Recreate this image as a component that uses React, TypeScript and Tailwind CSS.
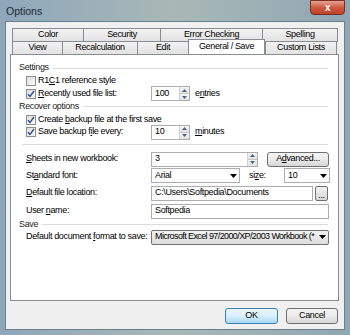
import React from "react";

const font = { fontFamily: "'Liberation Sans', Arial, sans-serif" };

function Check({ checked }: { checked?: boolean }) {
  return (
    <div className="w-[10px] h-[10px] border border-[#8f8f8f] bg-gradient-to-br from-[#dcdcdc] to-[#fbfbfb] flex items-center justify-center shrink-0">
      {checked && (
        <svg width="8" height="8" viewBox="0 0 8 8">
          <path d="M1 4.2 L3 6.4 L7 1" stroke="#2a4f8a" strokeWidth="1.4" fill="none" />
        </svg>
      )}
    </div>
  );
}

function U({ children }: { children: React.ReactNode }) {
  return <span className="underline underline-offset-1">{children}</span>;
}

function Spin() {
  return (
    <div className="w-[10px] h-full flex flex-col border-l border-[#d0d0d0] shrink-0">
      <div className="flex-1 flex items-center justify-center bg-gradient-to-b from-[#f6f6f6] to-[#e2e2e2] border-b border-[#c8c8c8]">
        <svg width="5" height="3" viewBox="0 0 5 3"><path d="M0 3 L2.5 0 L5 3Z" fill="#4d6185" /></svg>
      </div>
      <div className="flex-1 flex items-center justify-center bg-gradient-to-b from-[#f6f6f6] to-[#e2e2e2]">
        <svg width="5" height="3" viewBox="0 0 5 3"><path d="M0 0 L2.5 3 L5 0Z" fill="#4d6185" /></svg>
      </div>
    </div>
  );
}

function SpinInput({ value, w }: { value: string; w: string }) {
  return (
    <div className={`${w} h-[15px] border border-[#abadb3] bg-white flex items-stretch shrink-0`}>
      <div className="flex-1 pl-[3px] flex items-center">{value}</div>
      <Spin />
    </div>
  );
}

function Arrow() {
  return (
    <div className="w-[12px] flex items-center justify-center shrink-0">
      <svg width="7" height="4" viewBox="0 0 7 4"><path d="M0 0 L7 0 L3.5 4Z" fill="#000" /></svg>
    </div>
  );
}

function Combo({ value, w }: { value: string; w: string }) {
  return (
    <div className={`${w} h-[15px] border border-[#abadb3] bg-white flex items-center shrink-0`}>
      <div className="flex-1 pl-[3px] overflow-hidden">{value}</div>
      <Arrow />
    </div>
  );
}

function Section({ title }: { title: string }) {
  return (
    <div className="flex items-center gap-[4px] pl-[8px] pr-[10px] h-full">
      <span className="text-[#1e1e1e]">{title}</span>
      <div className="flex-1 h-px bg-[#dcdcdc]" />
    </div>
  );
}

function Tab({ label, w, selected }: { label: string; w: string; selected?: boolean }) {
  return (
    <div
      className={`${w} flex items-center justify-center border border-[#898c95] -ml-px first:ml-0 ${
        selected
          ? "bg-white h-[15px] -mt-[2px] border-b-0 relative z-10 mx-[1px]"
          : "bg-gradient-to-b from-[#f3f3f3] to-[#e2e2e2] h-[14px]"
      }`}
    >
      <span>{label}</span>
    </div>
  );
}

function Row({ h, label, children }: { h: string; label: React.ReactNode; children: React.ReactNode }) {
  return (
    <div className={`${h} grid grid-cols-[125px_1fr] items-center pl-[15px]`}>
      <span>{label}</span>
      <div className="flex items-center">{children}</div>
    </div>
  );
}

export default function App() {
  return (
    <div
      className="w-[350px] h-[335px] bg-gradient-to-r from-[#8ea7ba] via-[#a9b8b6] to-[#8fa7b2] flex flex-col text-[9px] tracking-[-0.35px] text-black overflow-hidden whitespace-nowrap"
      style={font}
    >
      {/* Title bar */}
      <div className="h-[21px] flex items-start">
        <div className="pl-[6px] pt-[4px] text-[10.5px] tracking-normal text-[#1c2a33]">Options</div>
        <div className="flex-1" />
        <div className="mr-[5px] w-[35px] h-[15px] rounded-b-[4px] border border-[#7a2e22] bg-gradient-to-b from-[#e6a393] via-[#cc5940] to-[#c0412a] flex items-center justify-center">
          <span className="text-white font-bold text-[10px] leading-none">x</span>
        </div>
      </div>

      {/* Client area */}
      <div className="mx-[5px] mb-[5px] flex-1 bg-[#f0f0f0] border border-[#6a7f8e] flex flex-col">
        {/* Tabs */}
        <div className="pl-[6px] pt-[6px] flex flex-col">
          <div className="flex">
            <Tab label="Color" w="w-[72px]" />
            <Tab label="Security" w="w-[78px]" />
            <Tab label="Error Checking" w="w-[103px]" />
            <Tab label="Spelling" w="w-[76px]" />
          </div>
          <div className="flex -mt-px">
            <Tab label="View" w="w-[51px]" />
            <Tab label="Recalculation" w="w-[76px]" />
            <Tab label="Edit" w="w-[52px]" />
            <Tab label="General / Save" w="w-[77px]" selected />
            <Tab label="Custom Lists" w="w-[72px]" />
          </div>
        </div>

        {/* Panel */}
        <div className="ml-[4px] w-[329px] h-[247px] -mt-px bg-white border border-[#898c95] flex flex-col pt-[7px]">
          <div className="h-[12px]"><Section title="Settings" /></div>
          <div className="h-[13px] flex items-center pl-[15px]">
            <Check />
            <span className="ml-[2px]">R1<U>C</U>1 reference style</span>
          </div>
          <div className="h-[13px] flex items-center pl-[15px]">
            <Check checked />
            <span className="ml-[2px] w-[113px] shrink-0"><U>R</U>ecently used file list:</span>
            <SpinInput value="100" w="w-[39px]" />
            <span className="ml-[5px]">e<U>n</U>tries</span>
          </div>
          <div className="h-[13px]"><Section title="Recover options" /></div>
          <div className="h-[13px] flex items-center pl-[15px]">
            <Check checked />
            <span className="ml-[2px]">Create <U>b</U>ackup file at the first save</span>
          </div>
          <div className="h-[12px] flex items-center pl-[15px]">
            <Check checked />
            <span className="ml-[2px] w-[113px] shrink-0">Save backup f<U>i</U>le every:</span>
            <SpinInput value="10" w="w-[39px]" />
            <span className="ml-[5px]"><U>m</U>inutes</span>
          </div>
          <div className="h-[13px] flex items-center pl-[11px] pr-[10px]">
            <div className="flex-1 h-px bg-[#dcdcdc]" />
          </div>
          <Row h="h-[16px]" label={<><U>S</U>heets in new workbook:</>}>
            <SpinInput value="3" w="w-[107px]" />
            <div className="ml-[9px] w-[62px] h-[15px] border border-[#707070] rounded-[3px] bg-gradient-to-b from-[#f3f3f3] via-[#ebebeb] to-[#d6d6d6] flex items-center justify-center shrink-0">
              A<U>d</U>vanced...
            </div>
          </Row>
          <Row h="h-[17px]" label={<>St<U>a</U>ndard font:</>}>
            <Combo value="Arial" w="w-[89px]" />
            <span className="ml-[9px] w-[35px] shrink-0">si<U>z</U>e:</span>
            <Combo value="10" w="w-[46px]" />
          </Row>
          <Row h="h-[18px]" label={<><U>D</U>efault file location:</>}>
            <div className="w-[162px] h-[15px] border border-[#abadb3] bg-white flex items-center pl-[3px] shrink-0">C:\Users\Softpedia\Documents</div>
            <div className="ml-[2px] w-[13px] h-[15px] border border-[#707070] rounded-[2px] bg-gradient-to-b from-[#f3f3f3] to-[#d6d6d6] flex items-end justify-center leading-[10px] shrink-0">...</div>
          </Row>
          <Row h="h-[18px]" label={<>User <U>n</U>ame:</>}>
            <div className="w-[178px] h-[15px] border border-[#abadb3] bg-white flex items-center pl-[3px] shrink-0">Softpedia</div>
          </Row>
          <div className="h-[9px]"><Section title="Save" /></div>
          <Row h="h-[16px]" label={<>Default document <U>f</U>ormat to save:</>}>
            <div className="w-[178px] h-[15px] border border-[#707070] rounded-[2px] bg-gradient-to-b from-[#f3f3f3] to-[#dddddd] flex items-center shrink-0">
              <div className="flex-1 pl-[3px] overflow-hidden tracking-[-0.6px]">Microsoft Excel 97/2000/XP/2003 Workbook (*</div>
              <Arrow />
            </div>
          </Row>
        </div>

        {/* Buttons */}
        <div className="flex justify-end gap-[8px] pr-[6px] mt-[7px]">
          <div className="w-[53px] h-[16px] border border-[#3c7fb1] rounded-[3px] bg-gradient-to-b from-[#eaf6fd] via-[#d9f0fc] to-[#a7d9f5] flex items-center justify-center">OK</div>
          <div className="w-[52px] h-[16px] border border-[#707070] rounded-[3px] bg-gradient-to-b from-[#f3f3f3] via-[#ebebeb] to-[#d6d6d6] flex items-center justify-center">Cancel</div>
        </div>
      </div>
    </div>
  );
}
